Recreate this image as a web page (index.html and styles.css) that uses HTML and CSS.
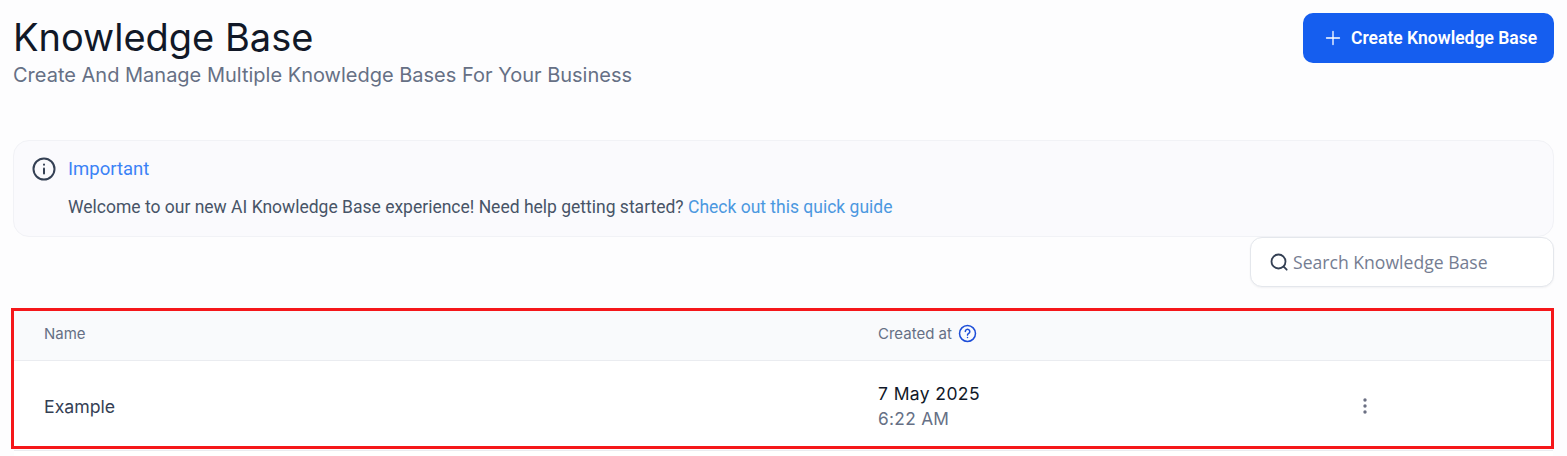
FILE: index.html
```html
<!DOCTYPE html>
<html lang="en">
<head>
  <meta charset="UTF-8" />
  <title>Knowledge Base</title>
  <link rel="stylesheet" href="styles.css">
</head>
<body>
<div class="page">
  <div class="page-head">
    <div>
      <h1 class="page-title">Knowledge Base</h1>
      <p class="page-subtitle">Create And Manage Multiple Knowledge Bases For Your Business</p>
    </div>
    <button class="create-btn" type="button">
      <svg width="16" height="16" viewBox="0 0 16 16" fill="none" stroke="#fff" stroke-width="1.3" stroke-linecap="round"><path d="M8 1.5v13M1.5 8h13"/></svg>
      Create Knowledge Base
    </button>
  </div>

  <div class="notice">
    <div class="notice-head">
      <svg width="24" height="24" viewBox="0 0 24 24" fill="none" stroke="#344054" stroke-width="2" stroke-linecap="round"><circle cx="12" cy="12" r="10.5"/><path d="M12 11.5v5"/><path d="M12 7.6v.2"/></svg>
      <span class="notice-title">Important</span>
    </div>
    <p class="notice-text">Welcome to our new AI Knowledge Base experience! Need help getting started? <a class="notice-link" href="#">Check out this quick guide</a></p>
  </div>

  <div class="search-row">
    <div class="search-box">
      <svg width="20" height="20" viewBox="0 0 20 20" fill="none" stroke="#344054" stroke-width="1.8" stroke-linecap="round"><circle cx="9.5" cy="9.5" r="7"/><path d="M14.7 14.7l3 3"/></svg>
      <span>Search Knowledge Base</span>
    </div>
  </div>

  <div class="table-wrap">
    <div class="table-row table-header">
      <div class="col-name">Name</div>
      <div class="col-date">
        Created at
        <svg width="19" height="19" viewBox="0 0 20 20" fill="none" stroke="#1d4ed8" stroke-width="1.6" stroke-linecap="round" stroke-linejoin="round"><circle cx="10" cy="10" r="8.4"/><path d="M7.7 7.9a2.35 2.35 0 1 1 3.6 2c-.8.5-1.3 1-1.3 1.8"/><path d="M10 14.2v.1"/></svg>
      </div>
      <div class="col-menu"></div>
    </div>
    <div class="table-row table-body">
      <div class="col-name example-name">Example</div>
      <div class="col-date">
        <div class="date-main">7 May 2025</div>
        <div class="date-time">6:22 AM</div>
      </div>
      <div class="col-menu">
        <svg width="4" height="16" viewBox="0 0 4 16" fill="#6b7083"><circle cx="2" cy="2" r="1.7"/><circle cx="2" cy="8" r="1.7"/><circle cx="2" cy="14" r="1.7"/></svg>
      </div>
    </div>
  </div>
  <div class="table-foot"></div>
</div>
</body>
</html>
```

FILE: styles.css
```css
body { margin: 0; background-color: #fdfdfe; font-family: Inter, "Liberation Sans", sans-serif; overflow: hidden; }
.page { padding: 13px 13px 0 13px; }

.page-head { display: flex; justify-content: space-between; align-items: flex-start; height: 127px; }
.page-title { margin: 0; font-size: 38px; line-height: 48px; font-weight: 400; color: #111827; }
.page-subtitle { margin: 0; font-size: 20px; line-height: 28px; font-weight: 400; color: #667085; }
.create-btn { display: flex; align-items: center; gap: 10px; width: 251px; height: 50px; padding: 0 0 0 22px; border: none; border-radius: 10px; background-color: #155eef; color: #fff; font-family: Roboto, sans-serif; font-size: 17.5px; font-weight: 600; }

.notice { box-sizing: border-box; height: 97px; padding: 16px 18px; background-color: #fafafd; border: 1px solid #f1f2f6; border-radius: 16px; }
.notice-head { display: flex; align-items: center; gap: 12px; height: 24px; }
.notice-title { font-family: Roboto, sans-serif; font-size: 18.5px; font-weight: 400; color: #3b82f6; }
.notice-text { margin: 14px 0 0 36px; font-family: Roboto, sans-serif; font-size: 17.5px; line-height: 24px; color: #475467; }
.notice-link { color: #4b98e0; text-decoration: none; }

.search-row { display: flex; justify-content: flex-end; margin-bottom: 21px; }
.search-box { box-sizing: border-box; display: flex; align-items: center; gap: 4px; width: 304px; height: 50px; padding: 0 18px; background-color: #fff; border: 1px solid #e4e7ec; border-radius: 12px; font-family: "Open Sans", sans-serif; font-size: 17.6px; color: #757d92; box-shadow: 0 1px 2px rgba(16, 24, 40, 0.05); }

.table-wrap { margin: 0 -2px; border: 3px solid #f5171a; background-color: #fff; box-sizing: border-box; height: 141px; width: 1543px; }
.table-row { display: flex; align-items: center; }
.table-header { box-sizing: border-box; height: 50px; padding-bottom: 5px; background-color: #f9fafc; border-bottom: 1px solid #eaecf0; font-size: 15px; font-weight: 400; color: #667085; }
.table-body { box-sizing: border-box; height: 85px; padding-top: 6px; font-size: 17.7px; color: #344054; }
.col-name { width: 864px; padding-left: 30px; box-sizing: border-box; flex-shrink: 0; }
.col-date { width: 485px; flex-shrink: 0; }
.table-header .col-date { display: flex; align-items: center; gap: 6px; }
.table-body .col-date, .table-body .col-menu { margin-bottom: 2px; }
.col-menu { display: flex; }
.date-main { font-size: 17.5px; line-height: 25px; font-weight: 400; color: #101828; letter-spacing: 0.4px; }
.date-time { font-size: 17.3px; line-height: 25px; color: #667085; letter-spacing: 0.3px; }
.table-foot { height: 6px; margin: 1px 1px 0 1px; border-top: 1px solid #eaecf0; background-color: #fff; }
```
